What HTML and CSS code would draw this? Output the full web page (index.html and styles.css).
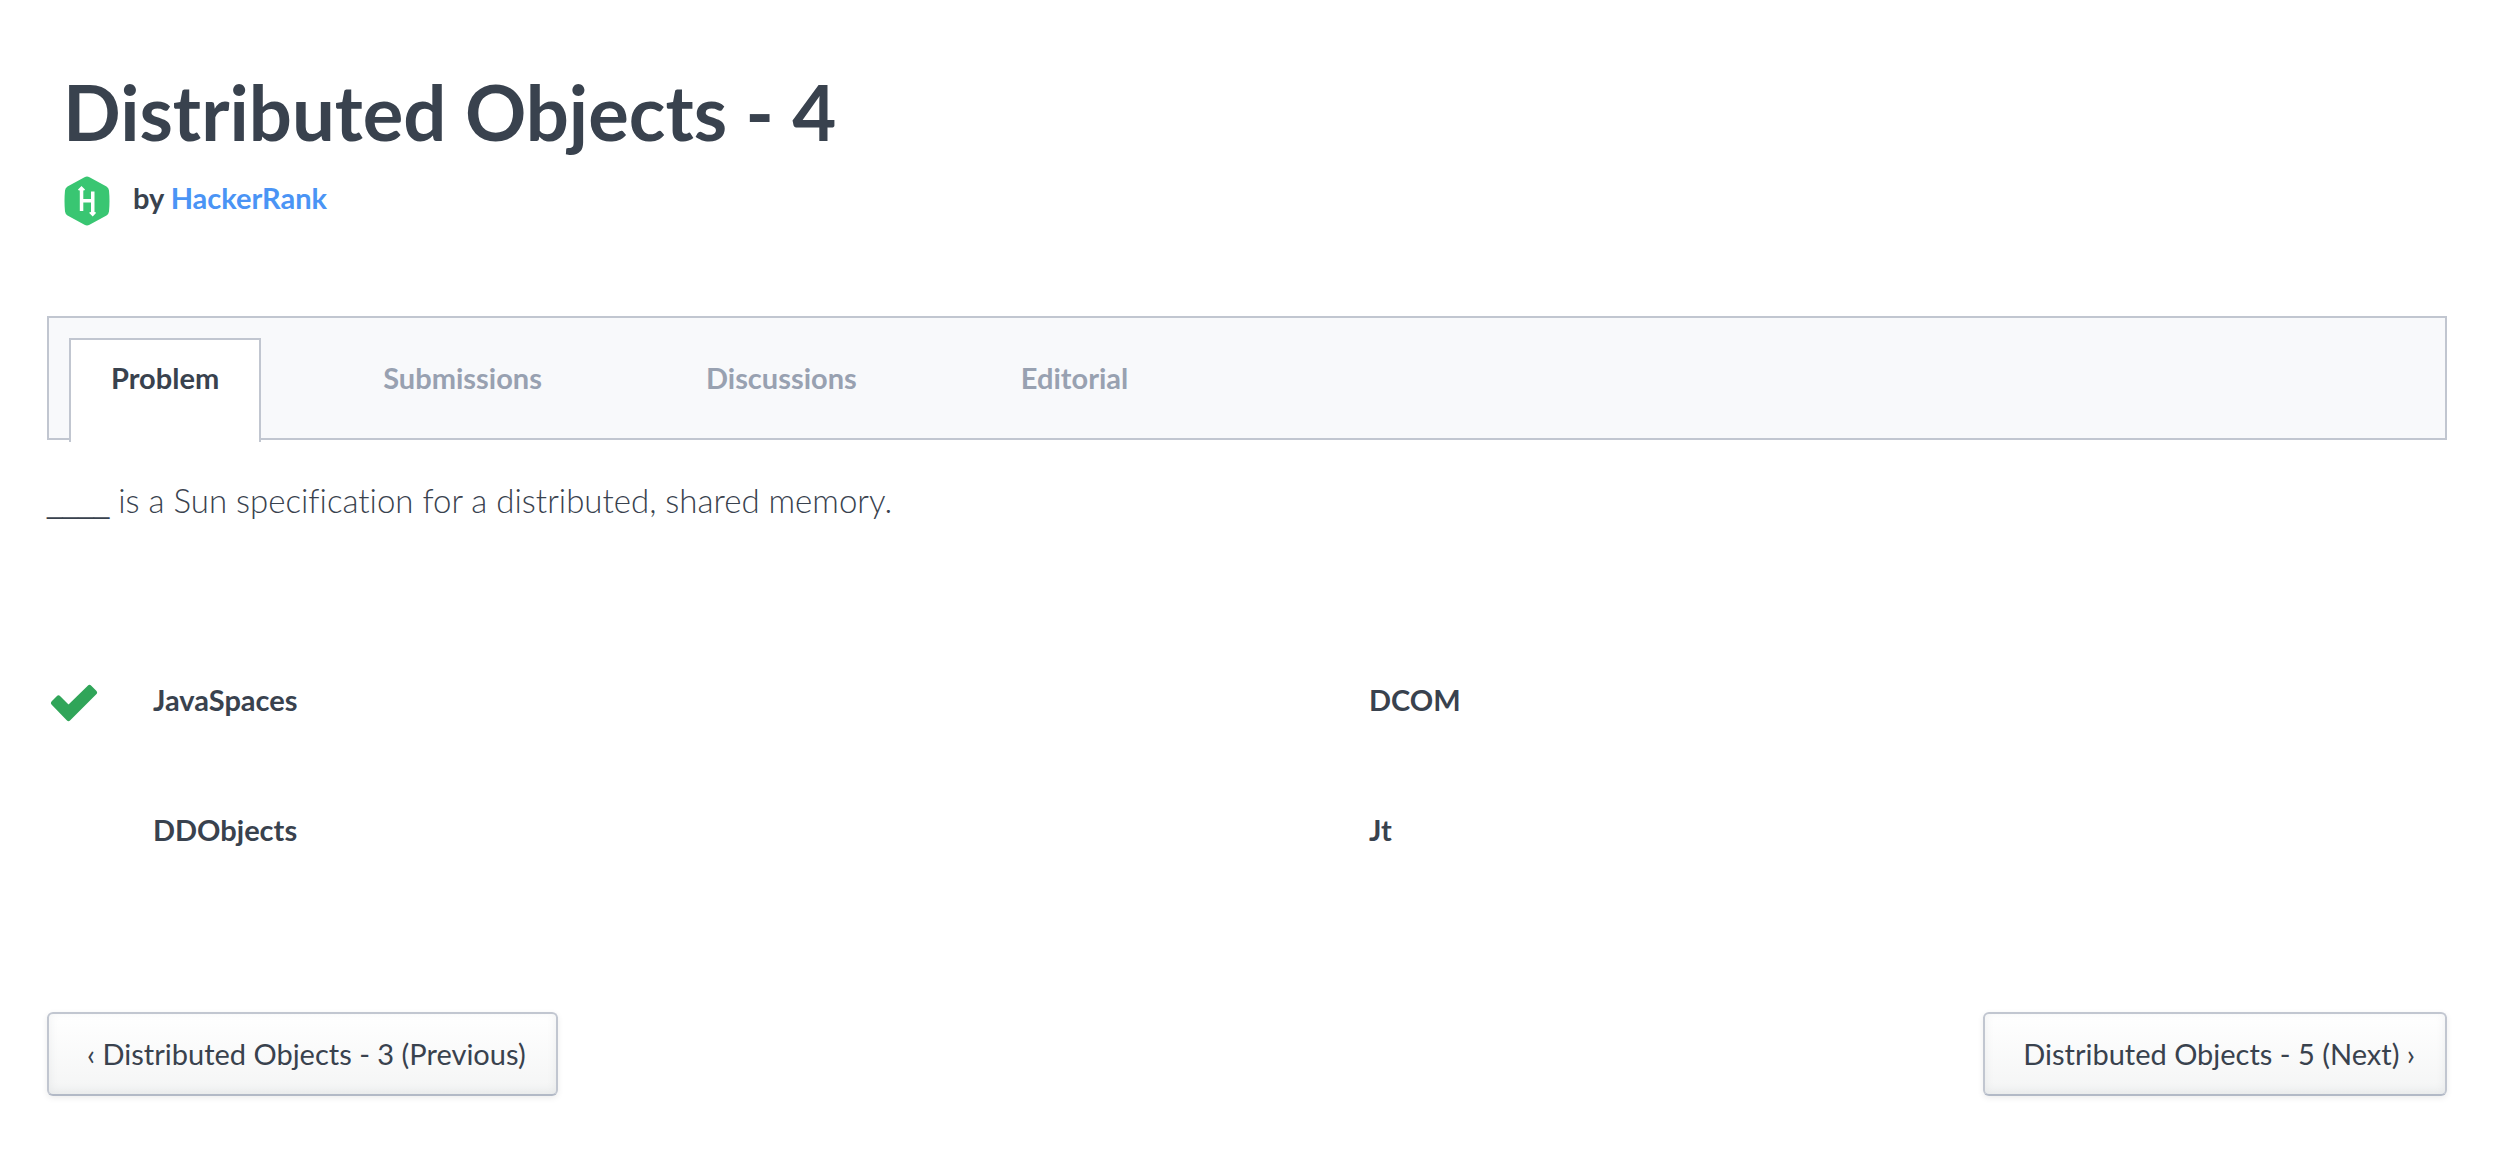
FILE: index.html
```html
<!DOCTYPE html>
<html lang="en">
<head>
<meta charset="utf-8">
<title>Distributed Objects - 4 | HackerRank</title>
<link rel="stylesheet" href="styles.css">
</head>
<body>
<main class="page">
  <header class="challenge-header">
    <h1 class="title">Distributed Objects - 4</h1>
    <div class="author">
      <svg class="author-logo" viewBox="0 0 46 50" aria-hidden="true">
        <path fill="#39c672" d="M20.500 1.200Q23-.4 25.500 1.200L42.500 10.500Q44.700 12 45 14.500Q46 25 45 35.500Q44.700 38 42.500 39.500L25.500 48.800Q23 50.400 20.500 48.800L3.500 39.500Q1.300 38 1 35.500Q0 25 1 14.500Q1.300 12 3.500 10.500Z"/>
        <path fill="#fff" d="M17.500 10L21 13.500Q21 14.500 19.300 14.500V23H27V15.500H30.500V36Q32 36 32 37L28.700 40.500L25.200 37Q25.200 36 27 36V26.500H19.300V35H15.800V14.500Q14 14.500 14 13.500Z"/>
      </svg>
      <p class="byline">by <a href="#">HackerRank</a></p>
    </div>
  </header>

  <nav class="tabs" aria-label="Challenge">
    <a class="tab tab-active" href="#" aria-current="page">Problem</a>
    <a class="tab" href="#">Submissions</a>
    <a class="tab" href="#">Discussions</a>
    <a class="tab" href="#">Editorial</a>
  </nav>

  <p class="question"><span class="blank">____</span> is a Sun specification for a distributed, shared memory.</p>

  <ul class="options">
    <li class="option">
      <svg class="check" viewBox="0 0 48 38" role="img" aria-label="Correct answer">
        <path fill="#30a559" stroke="#30a559" stroke-width="5" stroke-linejoin="round" d="M3.500 19L8.500 14L18.500 24L39.500 3.500L44.500 8.500L18.500 34.500Z"/>
      </svg>
      <span class="option-text">JavaSpaces</span>
    </li>
    <li class="option"><span class="option-text">DCOM</span></li>
    <li class="option"><span class="option-text">DDObjects</span></li>
    <li class="option"><span class="option-text">Jt</span></li>
  </ul>

  <footer class="pager">
    <button class="pager-button" type="button">‹ Distributed Objects - 3 (Previous)</button>
    <button class="pager-button" type="button">Distributed Objects - 5 (Next) ›</button>
  </footer>
</main>
</body>
</html>
```
FILE: styles.css
```css
* {
  box-sizing: border-box;
}

body {
  margin: 0;
  background: #fff;
  color: #39424e;
  font-family: Lato, "Open Sans", sans-serif;
  font-size: 29px;
  line-height: 40px;
  font-variant-ligatures: no-common-ligatures;
}

h1, p, ul {
  margin: 0;
  padding: 0;
}

.page {
  padding: 68px 59px 60px 47px;
}

.challenge-header {
  padding: 0 16px;
}

.title {
  font-size: 76px;
  font-weight: 700;
  line-height: 88px;
}

.author {
  display: flex;
  align-items: flex-start;
  gap: 22px;
  margin-top: 20px;
}

.author-logo {
  width: 48px;
  height: 50px;
}

.byline {
  padding-top: 2px;
  font-weight: 700;
}

.byline a {
  color: #4a94f5;
  text-decoration: none;
}

.tabs {
  display: flex;
  gap: 80px;
  height: 124px;
  margin-top: 90px;
  padding: 20px 20px 0;
  border: 2px solid #c1c6d0;
  background: #f8f9fb;
}

.tab {
  height: 104px;
  padding: 18px 40px 0;
  border: 2px solid transparent;
  border-bottom: 0;
  color: #98a1b1;
  font-weight: 700;
  text-decoration: none;
}

.tab-active {
  border-color: #c1c6d0;
  background: #fff;
  color: #39424e;
}

.question {
  margin-top: 38px;
  font-size: 33px;
  font-weight: 300;
  line-height: 44px;
}

.blank {
  font-family: "Liberation Sans", sans-serif;
  font-size: 28px;
}

.options {
  display: grid;
  grid-template-columns: 1fr 1fr;
  gap: 90px 32px;
  margin-top: 154px;
  list-style: none;
}

.option {
  display: grid;
  grid-template-columns: 106px 1fr;
  height: 40px;
  font-weight: 700;
}

.option-text {
  grid-column: 2;
}

.check {
  width: 48px;
  height: 38px;
  margin: 4px 0 0 3px;
}

.pager {
  display: flex;
  justify-content: space-between;
  margin-top: 162px;
}

.pager-button {
  padding: 20px 30px 20px 38px;
  border: 2px solid #c1c6d0;
  border-bottom-color: #b2b9c6;
  border-radius: 6px;
  background: linear-gradient(#fff, #f4f5f5);
  box-shadow: 0 2px 6px rgba(0, 0, 0, 0.08), inset 0 -2px 10px rgba(57, 66, 78, 0.08);
  color: #39424e;
  font: inherit;
}
```
